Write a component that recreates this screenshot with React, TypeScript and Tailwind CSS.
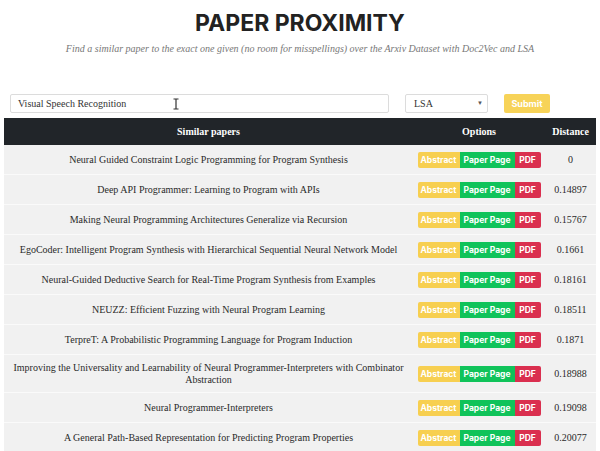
import React from "react";

const papers: [string, string][] = [
  ["Neural Guided Constraint Logic Programming for Program Synthesis", "0"],
  ["Deep API Programmer: Learning to Program with APIs", "0.14897"],
  ["Making Neural Programming Architectures Generalize via Recursion", "0.15767"],
  ["EgoCoder: Intelligent Program Synthesis with Hierarchical Sequential Neural Network Model", "0.1661"],
  ["Neural-Guided Deductive Search for Real-Time Program Synthesis from Examples", "0.18161"],
  ["NEUZZ: Efficient Fuzzing with Neural Program Learning", "0.18511"],
  ["TerpreT: A Probabilistic Programming Language for Program Induction", "0.1871"],
  [
    "Improving the Universality and Learnability of Neural Programmer-Interpreters with Combinator Abstraction",
    "0.18988",
  ],
  ["Neural Programmer-Interpreters", "0.19098"],
  ["A General Path-Based Representation for Predicting Program Properties", "0.20077"],
];

const serif = "font-['Liberation_Serif',serif]";
const sans = "font-['Inter',sans-serif]";

function Options() {
  return (
    <div className={`flex h-[16px] text-[8.5px] font-bold text-white ${sans}`}>
      <span className="flex w-[42px] items-center justify-center rounded-l-[2px] bg-[#f7cf50]">
        Abstract
      </span>
      <span className="flex w-[55px] items-center justify-center bg-[#10c35a]">
        Paper Page
      </span>
      <span className="flex w-[26px] items-center justify-center rounded-r-[2px] bg-[#da2f4f]">
        PDF
      </span>
    </div>
  );
}

export default function App() {
  return (
    <div className="min-h-screen bg-white px-1 text-[#2a2a2a]">
      <h1
        className={`pt-[9px] text-center text-[23px] font-bold leading-[28px] text-[#222] ${sans}`}
      >
        PAPER PROXIMITY
      </h1>
      <p className={`mt-[4px] text-center text-[10px] italic text-[#777] ${serif}`}>
        Find a similar paper to the exact one given (no room for misspellings) over the Arxiv
        Dataset with Doc2Vec and LSA
      </p>

      <div className="mt-[38px] flex items-center pl-[6px]">
        <div className="relative flex h-[19px] w-[379px] items-center rounded-[2px] border border-[#dcdcdc] bg-white pl-[7px]">
          <span className={`text-[10px] text-[#333] ${serif}`}>Visual Speech Recognition</span>
          <svg
            className="absolute left-[160px] top-[3px]"
            width="10"
            height="12"
            viewBox="0 0 10 12"
            fill="none"
            stroke="#333"
            strokeWidth="1.2"
          >
            <path d="M2.5 1h5M5 1v10M2.5 11h5" />
          </svg>
        </div>
        <div className="ml-[16px] flex h-[19px] w-[83px] items-center justify-between rounded-[2px] border border-[#dcdcdc] bg-white pl-[8px] pr-[4px]">
          <span className={`text-[10px] text-[#333] ${serif}`}>LSA</span>
          <span className="text-[6px] text-[#555]">▼</span>
        </div>
        <button
          className={`ml-[16px] flex h-[19px] w-[46px] items-center justify-center rounded-[2px] bg-[#f7d358] text-[9px] font-bold text-white ${sans}`}
        >
          Submit
        </button>
      </div>

      <table className={`mt-[5px] w-full border-collapse text-[10px] ${serif}`}>
        <thead>
          <tr className="h-[27px] bg-[#212529] text-white">
            <th className="w-[409px] font-bold">Similar papers</th>
            <th className="w-[132px] font-bold">Options</th>
            <th className="font-bold">Distance</th>
          </tr>
        </thead>
        <tbody>
          {papers.map(([title, dist]) => (
            <tr key={title} className="border-b border-[#fafafa] bg-[#f1f1f1]">
              <td className="px-[6px] pb-[6px] pt-[7px] text-center leading-[12px]">{title}</td>
              <td className="pb-[6px] pt-[7px]">
                <div className="flex justify-center">
                  <Options />
                </div>
              </td>
              <td className="pb-[6px] pt-[7px] text-center leading-[12px]">{dist}</td>
            </tr>
          ))}
        </tbody>
      </table>
    </div>
  );
}
